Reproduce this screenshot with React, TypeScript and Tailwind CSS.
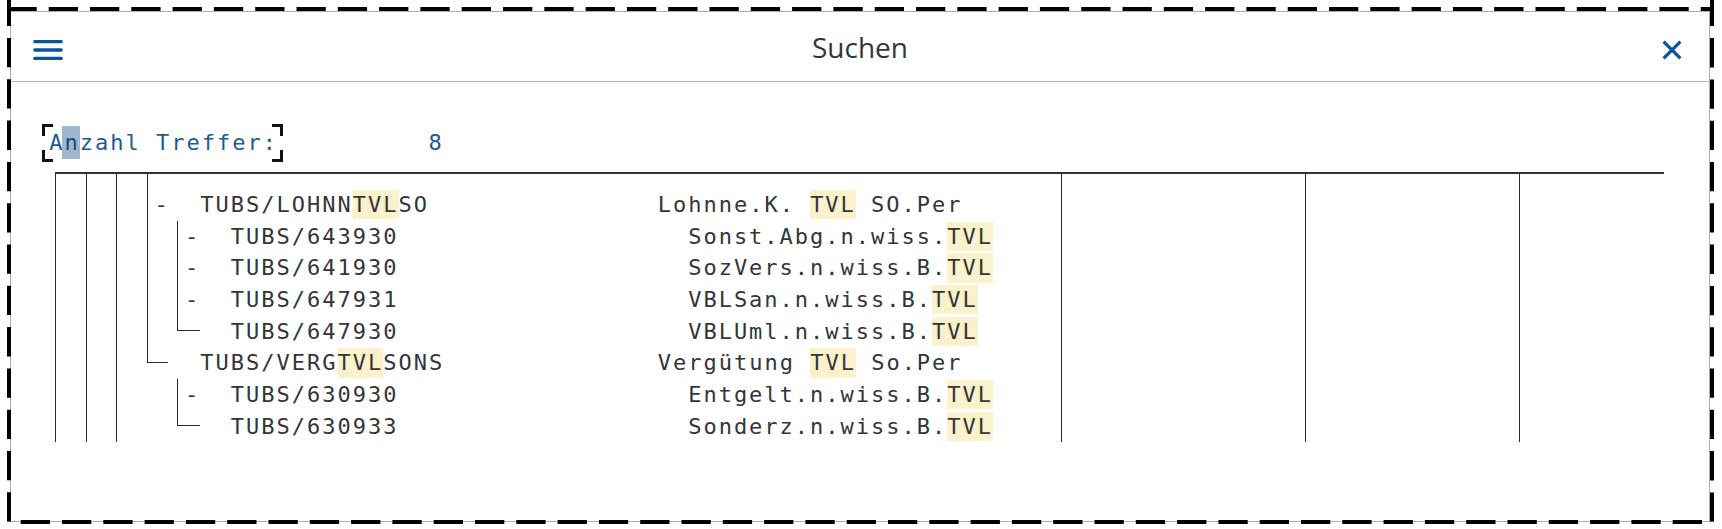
import React from 'react';

type Conn = 'line' | 'end' | null;

interface TreeRow {
  code: string;
  desc: string;
  level: 0 | 1;
  dash: boolean;
  outer: Conn;
  inner: Conn;
}

const rows: TreeRow[] = [
  { code: 'TUBS/LOHNNTVLSO', desc: 'Lohnne.K. TVL SO.Per', level: 0, dash: true, outer: 'line', inner: null },
  { code: 'TUBS/643930', desc: 'Sonst.Abg.n.wiss.TVL', level: 1, dash: true, outer: 'line', inner: 'line' },
  { code: 'TUBS/641930', desc: 'SozVers.n.wiss.B.TVL', level: 1, dash: true, outer: 'line', inner: 'line' },
  { code: 'TUBS/647931', desc: 'VBLSan.n.wiss.B.TVL', level: 1, dash: true, outer: 'line', inner: 'line' },
  { code: 'TUBS/647930', desc: 'VBLUml.n.wiss.B.TVL', level: 1, dash: false, outer: 'line', inner: 'end' },
  { code: 'TUBS/VERGTVLSONS', desc: 'Vergütung TVL So.Per', level: 0, dash: false, outer: 'end', inner: null },
  { code: 'TUBS/630930', desc: 'Entgelt.n.wiss.B.TVL', level: 1, dash: true, outer: null, inner: 'line' },
  { code: 'TUBS/630933', desc: 'Sonderz.n.wiss.B.TVL', level: 1, dash: false, outer: null, inner: 'end' },
];

const mono = "font-['DejaVu_Sans_Mono',monospace] text-[22px] tracking-[2px]";

function Highlighted({ text }: { text: string }) {
  const parts = text.split('TVL');
  return (
    <>
      {parts.map((p, i) => (
        <React.Fragment key={i}>
          {p}
          {i < parts.length - 1 && <span className="bg-[#fbf1cb] py-[2.2px]">TVL</span>}
        </React.Fragment>
      ))}
    </>
  );
}

function Row({ row }: { row: TreeRow }) {
  const prefix =
    row.level === 0 ? (row.dash ? '-  ' : '   ') : row.dash ? '  -  ' : '     ';
  const line = prefix + row.code.padEnd(30) + row.desc;

  return (
    <div className="grid h-[31.67px] grid-cols-[7.6px_15.25px_15.25px_15.25px_1fr] grid-rows-[31.67px]">
      {row.outer === 'line' && (
        <div className="col-start-1 row-start-1 border-l border-[#2a2a2a]" />
      )}
      {row.outer === 'end' && (
        <div className="col-start-1 col-end-3 row-start-1 h-[16px] w-[21.5px] border-b border-l border-[#2a2a2a]" />
      )}
      {row.inner === 'line' && (
        <div className="col-start-3 row-start-1 ml-[6.8px] border-l border-[#2a2a2a]" />
      )}
      {row.inner === 'end' && (
        <div className="col-start-3 col-end-5 row-start-1 ml-[6.8px] h-[15.5px] border-b border-l border-[#2a2a2a]" />
      )}
      <div className={`col-start-2 col-end-6 row-start-1 whitespace-pre leading-[31.67px] text-[#32363a] ${mono}`}>
        <Highlighted text={line} />
      </div>
    </div>
  );
}

function DashedFrame() {
  return (
    <svg className="pointer-events-none absolute inset-0" width="1722" height="529">
      <g stroke="#000" strokeWidth="4" strokeDasharray="29.3 12">
        <line x1="7.4" y1="9" x2="1714" y2="9" />
        <line x1="1712" y1="-3.2" x2="1712" y2="524" />
        <line x1="20.7" y1="522" x2="1714" y2="522" />
        <line x1="9" y1="-3.3" x2="9" y2="524" />
      </g>
    </svg>
  );
}

export default function App() {
  return (
    <div className="relative h-[529px] w-[1722px] overflow-hidden bg-white pl-[10px] pt-[11px]">
      <div className="h-[511px] w-[1700px] border border-[#9db2ca] bg-white">
        <header className="grid h-[70px] grid-cols-[1fr_auto_1fr] items-center border-b border-[#a3b7cd]">
          <button className="mt-[7px] justify-self-start pl-[22px]">
            <svg width="30" height="20" viewBox="0 0 30 20">
              <g stroke="#0854a0" strokeWidth="3.3" strokeLinecap="round">
                <line x1="1.8" y1="1.7" x2="28.2" y2="1.7" />
                <line x1="1.8" y1="10" x2="28.2" y2="10" />
                <line x1="1.8" y1="18.3" x2="28.2" y2="18.3" />
              </g>
            </svg>
          </button>
          <h1 className="font-['Open_Sans',sans-serif] text-[28px] leading-[28px] text-[#32363a]">
            Suchen
          </h1>
          <button className="mt-[7px] justify-self-end pr-[27px]">
            <svg width="20" height="20" viewBox="0 0 20 20">
              <g stroke="#0854a0" strokeWidth="3.2">
                <line x1="1.6" y1="1.6" x2="18.4" y2="18.4" />
                <line x1="18.4" y1="1.6" x2="1.6" y2="18.4" />
              </g>
            </svg>
          </button>
        </header>

        <main className="flex flex-col">
          <div className={`ml-[30.7px] mt-[41.5px] flex h-[38px] items-center text-[#1e5a96] ${mono}`}>
            <div className="relative flex h-[38px] items-center pl-[7.5px] pr-[5px] whitespace-pre">
              <span className="absolute left-0 top-0 h-[12px] w-[11px] border-l-[3px] border-t-[3px] border-[#111]" />
              <span className="absolute bottom-0 left-0 h-[12px] w-[11px] border-b-[3px] border-l-[3px] border-[#111]" />
              <span className="absolute right-0 top-0 h-[12px] w-[11px] border-r-[3px] border-t-[3px] border-[#111]" />
              <span className="absolute bottom-0 right-0 h-[12px] w-[11px] border-b-[3px] border-r-[3px] border-[#111]" />
              A<span className="-ml-[2.5px] bg-[#9fb6cf] pl-[2.5px] text-[#16497c]">n</span>zahl Treffer:
            </div>
            <span className="ml-[145.7px]">8</span>
          </div>

          <div className="ml-[44px] mt-[10px] flex w-[1609px] border-t-2 border-[#333]">
            <div className="w-[30.7px] border-l border-[#2a2a2a]" />
            <div className="w-[30.7px] border-l border-[#2a2a2a]" />
            <div className="w-[30.6px] border-l border-[#2a2a2a]" />
            <div className="flex w-[914px] flex-col">
              <div className="h-[15.67px] border-l border-[#2a2a2a]" />
              {rows.map((row) => (
                <Row key={row.code} row={row} />
              ))}
            </div>
            <div className="w-[244px] border-l border-[#2a2a2a]" />
            <div className="w-[214px] border-l border-[#2a2a2a]" />
            <div className="w-[145px] border-l border-[#2a2a2a]" />
          </div>
        </main>
      </div>
      <DashedFrame />
    </div>
  );
}
